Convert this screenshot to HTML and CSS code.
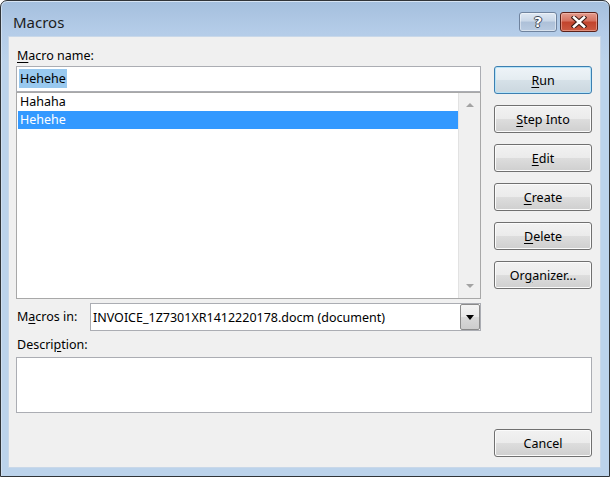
FILE: index.html
```html
<!DOCTYPE html>
<html lang="en">
<head>
    <meta charset="UTF-8">
    <title>Macros</title>
    <link rel="stylesheet" href="styles.css">
</head>
<body>
    <div class="window">
        <div class="titlebar">
            <span class="title">Macros</span>
            <div class="caption-buttons">
                <div class="cap help"><span>?</span></div>
                <div class="cap close">
                    <svg width="16" height="12" viewBox="0 0 16 12">
                        <path d="M3 1.5 L13 10.5 M13 1.5 L3 10.5" stroke="#3a1a14" stroke-width="4.6" stroke-linecap="square" fill="none"/>
                        <path d="M3 1.5 L13 10.5 M13 1.5 L3 10.5" stroke="#ffffff" stroke-width="2.6" stroke-linecap="square" fill="none"/>
                    </svg>
                </div>
            </div>
        </div>

        <div class="client">
            <div class="main">
                <div class="left">
                    <div class="label"><u>M</u>acro name:</div>
                    <div class="input"><span class="sel">Hehehe</span></div>
                    <div class="list">
                        <ul class="items">
                            <li>Hahaha</li>
                            <li class="selected">Hehehe</li>
                        </ul>
                        <div class="scrollbar">
                            <span class="arrow up"></span>
                            <span class="arrow down"></span>
                        </div>
                    </div>
                    <div class="macros-in">
                        <span class="label in-label">M<u>a</u>cros in:</span>
                        <div class="select">
                            <span class="select-text">INVOICE_1Z7301XR1412220178.docm (document)</span>
                            <span class="drop"><span class="drop-arrow"></span></span>
                        </div>
                    </div>
                </div>

                <div class="buttons">
                    <button class="btn default"><u>R</u>un</button>
                    <button class="btn"><u>S</u>tep Into</button>
                    <button class="btn"><u>E</u>dit</button>
                    <button class="btn"><u>C</u>reate</button>
                    <button class="btn"><u>D</u>elete</button>
                    <button class="btn">Or<u>g</u>anizer...</button>
                </div>
            </div>

            <div class="label desc-label">Descri<u>p</u>tion:</div>
            <div class="description"></div>

            <div class="footer">
                <button class="btn">Cancel</button>
            </div>
        </div>
    </div>
</body>
</html>
```

FILE: styles.css
```css
* {
    margin: 0;
    padding: 0;
    box-sizing: border-box;
}

body {
    background: #ffffff;
    font-family: "Noto Sans", sans-serif;
    font-size: 12.5px;
    color: #000;
}

u {
    text-decoration: underline;
    text-underline-offset: 2px;
}

.window {
    width: 610px;
    height: 477px;
    border: 1px solid #303438;
    border-radius: 7px 7px 0 0;
    background: linear-gradient(#a4bfdd, #b4cce8 30px, #bcd3eb 60px, #bcd3eb);
    box-shadow: inset 0 1px 0 #d6e4f3, inset 1px 0 0 #d0dff0;
}

/* title bar */
.titlebar {
    height: 35px;
    display: flex;
    align-items: flex-start;
    padding: 0 11px 0 12px;
}

.title {
    margin-top: 11px;
    font-size: 15px;
    line-height: 20px;
    color: #1c1c1c;
}

.caption-buttons {
    margin-left: auto;
    margin-top: 11px;
    display: flex;
    gap: 3px;
}

.cap {
    width: 38px;
    height: 20px;
    border-radius: 3px;
    display: flex;
    justify-content: center;
    align-items: center;
}

.help {
    border: 1px solid #6f839e;
    background: linear-gradient(#dfe8f3, #c9d7e8 45%, #adc0d8 50%, #b9cbe1);
    box-shadow: inset 0 0 0 1px rgba(255, 255, 255, 0.45);
}

.help span {
    font-family: "DejaVu Sans", sans-serif;
    font-weight: bold;
    font-size: 14px;
    line-height: 14px;
    color: #fff;
    text-shadow: 1px 0 0 #3b4654, -1px 0 0 #3b4654, 0 1px 0 #3b4654, 0 -1px 0 #3b4654;
}

.close {
    border: 1px solid #5b2119;
    background: linear-gradient(#e39c8e, #d5705e 45%, #c2432c 50%, #cb5a42);
    box-shadow: inset 0 0 0 1px rgba(255, 210, 200, 0.45);
}

/* client area */
.client {
    height: 432px;
    margin: 0 8px 0 7px;
    border: 1px solid #c9d8e9;
    background: #f0f0f0;
    padding: 11px 8px 0 7px;
}

.main {
    display: flex;
    gap: 13px;
}

.left {
    width: 465px;
}

.label {
    line-height: 16px;
    height: 16px;
    padding-left: 1px;
}

.input {
    margin-top: 2px;
    height: 26px;
    border: 1px solid #abadb3;
    background: #fff;
    padding: 2px 0 0 2px;
}

.sel {
    display: inline-block;
    background: #99c9ef;
    line-height: 19px;
    padding: 0 1px;
}

.list {
    height: 207px;
    border: 1px solid #a8a8a8;
    background: #fff;
    display: flex;
}

.items {
    list-style: none;
    flex: 1;
    padding: 0 0 0 1px;
}

.items li {
    line-height: 18px;
    height: 18px;
    padding-left: 2px;
}

.items li.selected {
    background: #3399ff;
    color: #fff;
}

.scrollbar {
    width: 22px;
    background: #f0f0f0;
    border-left: 1px solid #e2e2e2;
    display: flex;
    flex-direction: column;
    justify-content: space-between;
    align-items: center;
    padding: 10px 0 10px 0;
}

.arrow {
    width: 0;
    height: 0;
    border-left: 4px solid transparent;
    border-right: 4px solid transparent;
}

.arrow.up {
    border-bottom: 4px solid #a3a3a3;
}

.arrow.down {
    border-top: 4px solid #a3a3a3;
}

.macros-in {
    margin-top: 4px;
    display: flex;
    align-items: center;
}

.in-label {
    width: 74px;
}

.select {
    flex: 1;
    height: 28px;
    border: 1px solid #abadb3;
    background: #fff;
    display: flex;
    align-items: center;
}

.select-text {
    flex: 1;
    padding-left: 2px;
    white-space: nowrap;
}

.drop {
    width: 20px;
    height: 26px;
    border: 1px solid #8a8a8a;
    border-radius: 2px;
    background: linear-gradient(#f4f4f4, #e8e8e8 50%, #d9d9d9 51%, #cdcdcd);
    display: flex;
    justify-content: center;
    align-items: center;
}

.drop-arrow {
    width: 0;
    height: 0;
    border-left: 4px solid transparent;
    border-right: 4px solid transparent;
    border-top: 5px solid #000;
}

/* buttons */
.buttons {
    width: 98px;
    padding-top: 18px;
    display: flex;
    flex-direction: column;
    gap: 11px;
}

.btn {
    width: 98px;
    height: 28px;
    border: 1px solid #707070;
    border-radius: 3px;
    background: linear-gradient(#f2f2f2, #ebebeb 50%, #dddddd 51%, #cfcfcf);
    box-shadow: inset 0 0 0 1px #fbfbfb;
    font-family: "Noto Sans", sans-serif;
    font-size: 12.5px;
    font-weight: normal;
    color: #000;
}

.btn.default {
    border-color: #3c7fb1;
    box-shadow: inset 0 0 0 1px #b7e3f7;
    background: linear-gradient(#eef4f8, #e4ecf1 50%, #d6e1e8 51%, #cbd7df);
}

.desc-label {
    margin-top: 6px;
}

.description {
    margin-top: 4px;
    width: 576px;
    height: 56px;
    border: 1px solid #abadb3;
    background: #fff;
}

.footer {
    width: 576px;
    margin-top: 16px;
    display: flex;
    justify-content: flex-end;
}
```
